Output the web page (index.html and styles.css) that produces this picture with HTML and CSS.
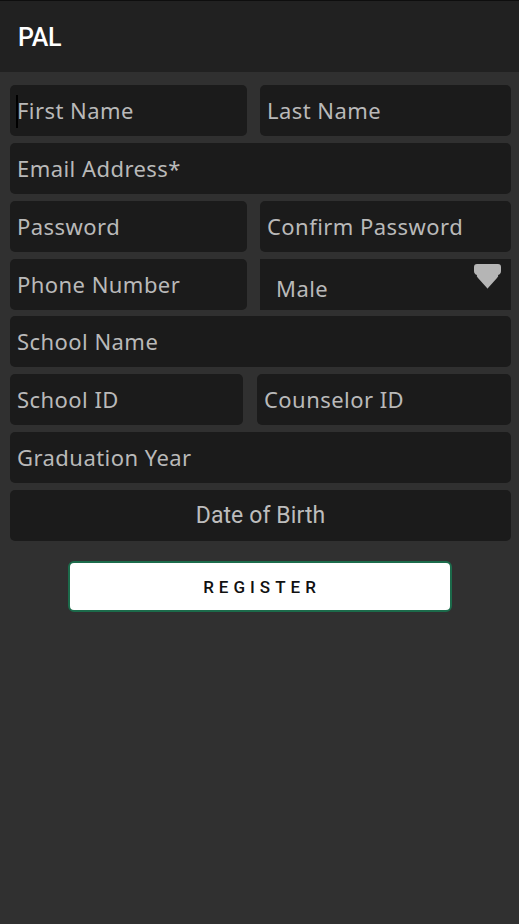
FILE: index.html
```html
<!DOCTYPE html>
<html>
<head>
<meta charset="utf-8">
<link rel="stylesheet" href="styles.css">
</head>
<body>
<header class="appbar"><span class="title">PAL</span></header>
<main class="form">
  <div class="row two">
    <div class="field"><span class="cursor"></span>First Name</div>
    <div class="field">Last Name</div>
  </div>
  <div class="row"><div class="field">Email Address*</div></div>
  <div class="row two">
    <div class="field">Password</div>
    <div class="field">Confirm Password</div>
  </div>
  <div class="row two">
    <div class="field">Phone Number</div>
    <div class="field select"><span class="sel-text">Male</span>
      <svg class="arrow" width="27" height="25" viewBox="0 0 27 25"><path d="M3 0 H24 Q27 0 27 3 V7 Q27 10 24 11 Q25 12 23 14 L14 24 Q13.5 25 13 24 L4 14 Q2 12 3 11 Q0 10 0 7 V3 Q0 0 3 0 Z" fill="#b5b5b5"/></svg>
    </div>
  </div>
  <div class="row tight"><div class="field">School Name</div></div>
  <div class="row two alt">
    <div class="field">School ID</div>
    <div class="field">Counselor ID</div>
  </div>
  <div class="row"><div class="field">Graduation Year</div></div>
  <div class="row"><div class="field dob">Date of Birth</div></div>
  <div class="btnwrap"><button class="register">REGISTER</button></div>
</main>
</body>
</html>
```
FILE: styles.css
```css
html, body { margin: 0; padding: 0; }
body {
  background: #303030;
  width: 519px;
  height: 924px;
  font-family: "Noto Sans", "Open Sans", sans-serif;
  overflow: hidden;
}
.appbar {
  height: 71px;
  background: #212121;
  border-top: 1px solid #0e0e0e;
  display: flex;
  align-items: center;
  padding-left: 18px;
}
.title {
  color: #ffffff;
  font-family: Roboto, sans-serif;
  font-weight: 500;
  font-size: 25px;
  letter-spacing: -0.3px;
  margin-top: 1px;
}
.form {
  padding: 13px 8px 0 10px;
  display: flex;
  flex-direction: column;
  gap: 7px;
}
.row { display: flex; gap: 13px; }
.row.tight { margin-top: -1px; }
.row.alt { gap: 14px; }
.row > .field { flex: 1; }
.row.two > .field:first-child { flex: 0 0 237px; }
.row.alt > .field:first-child { flex: 0 0 233px; }
.field {
  position: relative;
  height: 51px;
  background: #1b1b1b;
  border-radius: 5px;
  color: #b9b9b9;
  font-size: 22px;
  letter-spacing: 0.45px;
  display: flex;
  align-items: center;
  padding-left: 7px;
  box-sizing: border-box;
  padding-bottom: 2px;
}
.cursor {
  position: absolute;
  left: 6px;
  top: 10px;
  width: 2px;
  height: 33px;
  background: #000;
}
.select {
  border-radius: 0;
  padding-left: 16px;
  padding-bottom: 0;
  padding-top: 6px;
}
.arrow { position: absolute; right: 10px; top: 5px; }
.dob {
  justify-content: center;
  padding-left: 0;
  padding-bottom: 0;
  font-family: Roboto, sans-serif;
  font-size: 23px;
  letter-spacing: 0.1px;
  color: #bdbdbd;
}
.btnwrap { display: flex; justify-content: center; padding-top: 13px; padding-right: 2px; }
.register {
  width: 384px;
  height: 51px;
  background: #ffffff;
  border: 2px solid #1c6b4b;
  border-radius: 6px;
  font-family: Roboto, sans-serif;
  font-weight: 500;
  font-size: 17px;
  letter-spacing: 5px;
  color: #111;
  padding: 0 0 0 5px;
}
```
